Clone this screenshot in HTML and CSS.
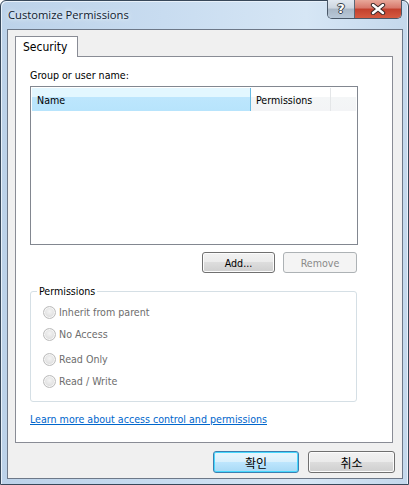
FILE: index.html
```html
<!DOCTYPE html>
<html>
<head>
<meta charset="utf-8">
<link rel="stylesheet" href="styles.css">
</head>
<body>
<div class="window">
  <div class="titlebar">
    <span class="title">Customize Permissions</span>
    <div class="caption-btns">
      <div class="cb help"><span>?</span></div>
      <div class="cb close">
        <svg width="18" height="12" viewBox="0 0 18 12">
          <path d="M4 2 L14 10 M14 2 L4 10" stroke="#3b2a2a" stroke-width="4.4" stroke-linecap="round"/>
          <path d="M4 2 L14 10 M14 2 L4 10" stroke="#ffffff" stroke-width="2.4" stroke-linecap="round"/>
        </svg>
      </div>
    </div>
  </div>
  <div class="client">
    <div class="tabs"><div class="tab">Security</div></div>
    <div class="panel">
      <div class="label">Group or user name:</div>
      <div class="listview">
        <div class="lv-header">
          <div class="col col-name">Name</div>
          <div class="col col-perm">Permissions</div>
          <div class="col col-fill"></div>
        </div>
      </div>
      <div class="btnrow">
        <button class="btn btn-add">Add...</button>
        <button class="btn btn-remove disabled">Remove</button>
      </div>
      <div class="group">
        <div class="legend">Permissions</div>
        <div class="radio r1"><span class="dot"></span><span>Inherit from parent</span></div>
        <div class="radio r2"><span class="dot"></span><span>No Access</span></div>
        <div class="radio r3"><span class="dot"></span><span>Read Only</span></div>
        <div class="radio r4"><span class="dot"></span><span>Read / Write</span></div>
      </div>
      <a class="link" href="#">Learn more about access control and permissions</a>
    </div>
    <div class="dlg-buttons">
      <button class="btn dlg default">확인</button>
      <button class="btn dlg">취소</button>
    </div>
  </div>
</div>
</body>
</html>
```

FILE: styles.css
```css
* { box-sizing: border-box; }
html, body { margin: 0; padding: 0; background: #fff; }
body {
  font-family: "DejaVu Sans Condensed", "Liberation Sans", "Noto Sans CJK KR", sans-serif;
  font-size: 10.6px;
}
.window {
  width: 409px;
  height: 485px;
  border: 1px solid #38485a;
  border-radius: 6px 6px 0 0;
  padding: 0 5px 5px 6px;
  background: linear-gradient(90deg, #bcd2e9 0%, #c8dcf0 40%, #d6e6f5 75%, #c4d8ec 100%);
  display: flex;
  flex-direction: column;
  box-shadow: inset 1px 1px 0 #e8f1fa, inset -1px 0 0 #e8f1fa;
}
.titlebar {
  height: 28px;
  display: flex;
  align-items: flex-start;
  margin-left: -6px;
  margin-right: -5px;
}
.title {
  font-family: "Open Sans", "Liberation Sans", sans-serif;
  font-size: 11.2px;
  color: #10202e;
  margin: 6px 0 0 7px;
  text-shadow: 0 0 6px #eaf3fb, 0 0 3px #eaf3fb;
}
.caption-btns {
  margin-left: auto;
  margin-right: 6px;
  display: flex;
  height: 19px;
  margin-top: -1px;
  border: 1px solid #4a5868;
  border-top: none;
  border-radius: 0 0 5px 5px;
  overflow: hidden;
}
.cb {
  height: 100%;
  display: flex;
  align-items: center;
  justify-content: center;
}
.help {
  width: 27px;
  border-right: 1px solid #5b6775;
  background: linear-gradient(#e1e8f0 0%, #cdd6e0 45%, #a9b7c6 50%, #b8c8d8 100%);
}
.help span {
  font-family: "DejaVu Sans", sans-serif;
  font-weight: bold;
  font-size: 13px;
  color: #fff;
  text-shadow: 0 0 1px #333, 1px 0 0 #3a4550, -1px 0 0 #3a4550, 0 1px 0 #3a4550, 0 -1px 0 #3a4550;
  margin-top: -1px;
}
.close {
  width: 46px;
  background: linear-gradient(#e8a89a 0%, #d7776a 45%, #c2402d 50%, #d65a40 100%);
}
.client {
  flex: 1;
  border: 1px solid #6d7888;
  background: #f0f0f0;
  display: flex;
  flex-direction: column;
  padding: 6px 7px 5px 7px;
}
.tabs { display: flex; height: 20px; position: relative; z-index: 1; }
.tab {
  width: 63px;
  height: 21px;
  border: 1px solid #898c95;
  border-bottom: none;
  background: #fff;
  font-size: 12px;
  padding: 3px 0 0 7px;
  font-family: "DejaVu Sans Condensed", "Liberation Sans", sans-serif;
}
.panel {
  height: 387px;
  margin-right: 2px;
  border: 1px solid #898c95;
  background: #fff;
  padding: 11px 0 0 14px;
  display: flex;
  flex-direction: column;
  align-items: flex-start;
}
.label { line-height: 14px; height: 14px; margin-bottom: 4px; }
.listview {
  width: 328px;
  height: 159px;
  border: 1px solid #828790;
  padding: 1px;
}
.lv-header { display: flex; height: 23px; }
.col {
  height: 100%;
  display: flex;
  align-items: center;
}
.col-name {
  width: 219px;
  padding-left: 5px;
  background: linear-gradient(#e3f7ff 0%, #e3f7ff 40%, #bde6fd 41%, #b7e4fc 100%);
  border-right: 1px solid #69bbe3;
}
.col-perm {
  width: 80px;
  padding-left: 5px;
  background: linear-gradient(#ffffff 0%, #ffffff 40%, #f4f6f7 41%, #f3f4f6 100%);
  border-right: 1px solid #e4e6e8;
}
.col-fill {
  flex: 1;
  background: linear-gradient(#ffffff 0%, #ffffff 40%, #f4f6f7 41%, #f3f4f6 100%);
}
.btnrow {
  display: flex;
  gap: 8px;
  margin-top: 7px;
  margin-left: 172px;
}
.btn {
  font-family: "DejaVu Sans Condensed", "Liberation Sans", "Noto Sans CJK KR", sans-serif;
  font-size: 10.6px;
  color: #000;
  border: 1px solid #707070;
  border-radius: 3px;
  background: linear-gradient(#f2f2f2 0%, #ebebeb 48%, #dddddd 50%, #cfcfcf 100%);
  padding: 0;
  margin: 0;
  box-shadow: inset 0 0 0 1px #fcfcfc;
}
.btn-add { width: 73px; height: 21px; }
.btn-remove { width: 74px; height: 21px; }
.btn.disabled {
  border-color: #adb2b5;
  background: #f4f4f4;
  color: #8a8a8a;
  box-shadow: none;
}
.group {
  width: 327px;
  height: 111px;
  margin-top: 18px;
  border: 1px solid #d5dfe5;
  border-radius: 3px;
  padding: 0 0 0 12px;
}
.legend {
  width: fit-content;
  background: #fff;
  padding: 0 2px;
  margin: -7px 0 0 -6px;
  line-height: 13px;
  height: 13px;
}
.radio {
  display: flex;
  align-items: center;
  height: 18px;
  gap: 3px;
  color: #6d6d6d;
}
.r1 { margin-top: 5px; }
.r2 { margin-top: 4px; }
.r3 { margin-top: 7px; }
.r4 { margin-top: 4px; }
.dot {
  width: 13px;
  height: 13px;
  border-radius: 50%;
  border: 1px solid #bcbcbc;
  background: radial-gradient(circle at 50% 40%, #f4f4f4 0%, #e2e2e2 55%, #d3d3d3 100%);
  box-shadow: inset 0 0 0 1px #f6f6f6;
}
.link {
  margin-top: 11px;
  line-height: 13px;
  color: #0066cc;
  text-decoration: underline;
}
.dlg-buttons {
  display: flex;
  justify-content: flex-end;
  gap: 9px;
  margin-top: 8px;
}
.btn.dlg {
  height: 22px;
  width: 87px;
  font-family: "Noto Sans CJK KR", sans-serif;
  font-size: 12px;
}
.btn.default {
  width: 86px;
  border-color: #3c7fb1;
  background: linear-gradient(#eaf6fd 0%, #d9f0fc 48%, #bee6fd 50%, #a7d9f5 100%);
  box-shadow: inset 0 0 0 1px #48d8fd;
}
```
